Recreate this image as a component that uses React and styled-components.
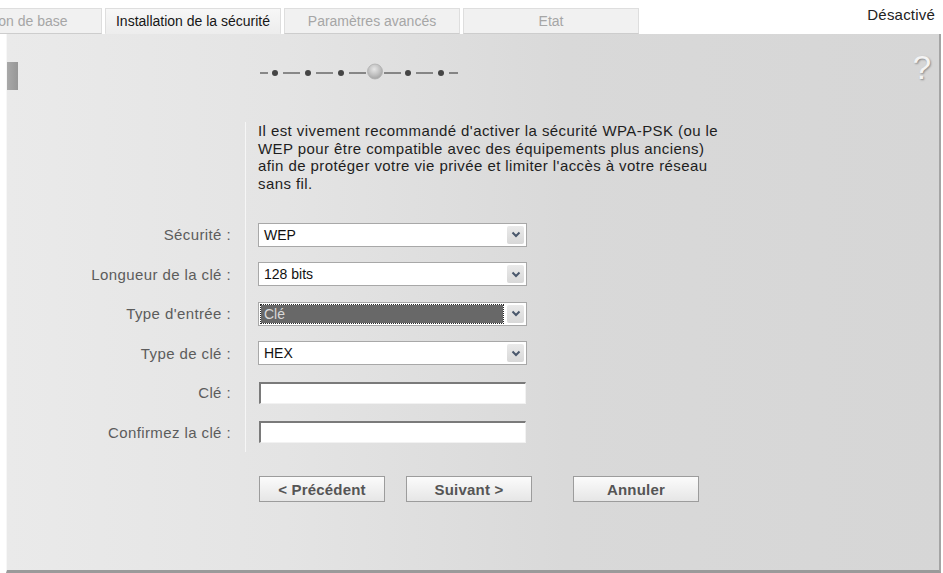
import React from "react";
import styled, { createGlobalStyle } from "styled-components";

const GlobalStyle = createGlobalStyle`
  html, body {
    margin: 0;
    padding: 0;
    background: #ffffff;
  }
  body {
    font-family: "Liberation Sans", Arial, sans-serif;
    overflow: hidden;
  }
`;

const Page = styled.div`
  width: 943px;
  height: 573px;
  overflow: hidden;
`;

const TopBar = styled.div`
  display: flex;
  align-items: flex-end;
  height: 34px;
`;

const Tabs = styled.div`
  display: flex;
  gap: 3px;
  margin-left: -74px;
`;

const Tab = styled.div`
  width: 176px;
  height: 26px;
  box-sizing: border-box;
  display: flex;
  align-items: center;
  justify-content: center;
  padding-right: ${(p) => (p.$shift ? "30px" : "0")};
  white-space: nowrap;
  font-size: 14px;
  color: ${(p) => (p.$active ? "#161616" : "#a6a6a6")};
  background: ${(p) =>
    p.$active ? "linear-gradient(#f7f7f7, #ededed)" : "#f1f1f1"};
  border: 1px solid #dedede;
  border-bottom: 1px solid ${(p) => (p.$active ? "#ededed" : "#cdcdcd")};
`;

const Status = styled.div`
  margin-left: auto;
  align-self: flex-start;
  padding: 6px 8px 0 0;
  font-size: 15px;
  letter-spacing: 0.2px;
  color: #222;
`;

const Panel = styled.div`
  margin-left: 6px;
  width: 935px;
  height: 539px;
  box-sizing: border-box;
  background: linear-gradient(
    to right,
    #eaeaea 0%,
    #e4e4e4 30%,
    #d9d9d9 60%,
    #d6d6d6 100%
  );
  border-left: 1px solid #f7f7f7;
  border-right: 2px solid #a4a4a4;
  border-bottom: 3px solid #9a9a9a;
  display: flex;
  flex-direction: column;
`;

const Header = styled.div`
  display: flex;
  align-items: center;
  height: 88px;
  padding-right: 8px;
`;

const SideMark = styled.div`
  width: 11px;
  height: 28px;
  margin-top: -4px;
  background: linear-gradient(to right, #a9a9a9, #979797);
`;

const Steps = styled.svg`
  margin-left: 240px;
  margin-top: -12px;
`;

const Help = styled.div`
  margin-left: auto;
  margin-top: -20px;
  font-size: 33px;
  color: #f4f4f4;
  text-shadow: 1px 1px 2px #8a8a8a;
`;

const Form = styled.div`
  display: grid;
  grid-template-columns: 238px 1fr;
  grid-auto-rows: auto;
`;

const Content = styled.div`
  grid-column: 2;
  border-left: 1px solid #f6f6f6;
  padding-left: 12px;
  display: flex;
  align-items: center;
  height: ${(p) => (p.$intro ? "auto" : "39.5px")};
`;

const Intro = styled.p`
  margin: 0 0 23px;
  width: 464px;
  font-size: 15px;
  letter-spacing: 0.42px;
  line-height: 17.5px;
  color: #1e1e1e;
`;

const Label = styled.div`
  grid-column: 1;
  display: flex;
  align-items: center;
  justify-content: flex-end;
  padding-right: 14px;
  height: 39.5px;
  font-size: 15px;
  letter-spacing: 0.4px;
  color: #5c5c5c;
`;

const SelectBox = styled.div`
  width: 269px;
  height: 24px;
  box-sizing: border-box;
  display: flex;
  align-items: center;
  background: #ffffff;
  border: 1px solid #a8a8a8;
  padding: 2px;
`;

const SelectField = styled.div`
  flex: 1;
  height: 100%;
  box-sizing: border-box;
  display: flex;
  align-items: center;
  padding-left: 3px;
  font-size: 14px;
  color: ${(p) => (p.$focused ? "#d8d8d8" : "#111")};
  background: ${(p) => (p.$focused ? "#686868" : "transparent")};
  outline: ${(p) => (p.$focused ? "1px dotted #2a2a2a" : "none")};
  margin-right: 4px;
`;

const Arrow = styled.div`
  width: 17px;
  height: 18px;
  display: flex;
  align-items: center;
  justify-content: center;
  background: linear-gradient(#eaeaea, #d8d8d8);
  border-radius: 2px;
`;

const TextField = styled.input`
  width: 267px;
  height: 22px;
  box-sizing: border-box;
  margin: 0 0 0 1px;
  background: #ffffff;
  border-top: 2px solid #7a7a7a;
  border-left: 2px solid #7a7a7a;
  border-right: 1px solid #f2f2f2;
  border-bottom: 1px solid #f2f2f2;
  font-family: inherit;
  font-size: 14px;
  outline: none;
`;

const ButtonRow = styled.div`
  display: flex;
  gap: 21px;
  padding-left: 252px;
  margin-top: 24px;
`;

const Button = styled.button`
  width: 126px;
  height: 26px;
  margin: 0 0 0 ${(p) => (p.$spaced ? "20px" : "0")};
  border: 1px solid #9c9c9c;
  background: linear-gradient(#fbfbfb, #e6e6e6);
  font-family: inherit;
  font-size: 15px;
  letter-spacing: 0.2px;
  font-weight: bold;
  color: #555;
  padding: 0;
`;

const Chevron = () => (
  <svg width="10" height="7" viewBox="0 0 10 7">
    <path d="M1.5 1.5 L5 5 L8.5 1.5" fill="none" stroke="#4a586c" strokeWidth="2" />
  </svg>
);

const Select = ({ value, focused }) => (
  <SelectBox>
    <SelectField $focused={focused}>{value}</SelectField>
    <Arrow>
      <Chevron />
    </Arrow>
  </SelectBox>
);

const StepTrack = () => {
  const dots = [17, 50, 83, 150, 183];
  const lines = [
    [2, 10],
    [25, 42],
    [58, 75],
    [91, 108],
    [126, 143],
    [158, 175],
    [191, 200],
  ];
  return (
    <Steps width="202" height="22" viewBox="0 0 202 22">
      <defs>
        <radialGradient id="cur" cx="0.45" cy="0.35" r="0.7">
          <stop offset="0" stopColor="#e6e6e6" />
          <stop offset="0.6" stopColor="#bdbdbd" />
          <stop offset="1" stopColor="#9e9e9e" />
        </radialGradient>
      </defs>
      {lines.map(([a, b], i) => (
        <line key={i} x1={a} y1="12" x2={b} y2="12" stroke="#555" strokeWidth="1.3" />
      ))}
      {dots.map((x) => (
        <circle key={x} cx={x} cy="12" r="3" fill="#454545" />
      ))}
      <circle cx="117" cy="10.5" r="7.5" fill="url(#cur)" stroke="#b0b0b0" strokeWidth="0.8" />
    </Steps>
  );
};

const rows = [
  { label: "Sécurité :", type: "select", value: "WEP" },
  { label: "Longueur de la clé :", type: "select", value: "128 bits" },
  { label: "Type d'entrée :", type: "select", value: "Clé", focused: true },
  { label: "Type de clé :", type: "select", value: "HEX" },
  { label: "Clé :", type: "text" },
  { label: "Confirmez la clé :", type: "text" },
];

export default function App() {
  return (
    <Page>
      <GlobalStyle />
      <TopBar>
        <Tabs>
          <Tab $shift>Configuration de base</Tab>
          <Tab $active>Installation de la sécurité</Tab>
          <Tab>Paramètres avancés</Tab>
          <Tab>Etat</Tab>
        </Tabs>
        <Status>Désactivé</Status>
      </TopBar>
      <Panel>
        <Header>
          <SideMark />
          <StepTrack />
          <Help>?</Help>
        </Header>
        <Form>
          <Content $intro>
            <Intro>
              Il est vivement recommandé d'activer la sécurité WPA-PSK (ou le
              WEP pour être compatible avec des équipements plus anciens) afin
              de protéger votre vie privée et limiter l'accès à votre réseau
              sans fil.
            </Intro>
          </Content>
          {rows.map((r) => (
            <React.Fragment key={r.label}>
              <Label>{r.label}</Label>
              <Content>
                {r.type === "select" ? (
                  <Select value={r.value} focused={r.focused} />
                ) : (
                  <TextField type="text" />
                )}
              </Content>
            </React.Fragment>
          ))}
        </Form>
        <ButtonRow>
          <Button>&lt; Précédent</Button>
          <Button>Suivant &gt;</Button>
          <Button $spaced>Annuler</Button>
        </ButtonRow>
      </Panel>
    </Page>
  );
}
